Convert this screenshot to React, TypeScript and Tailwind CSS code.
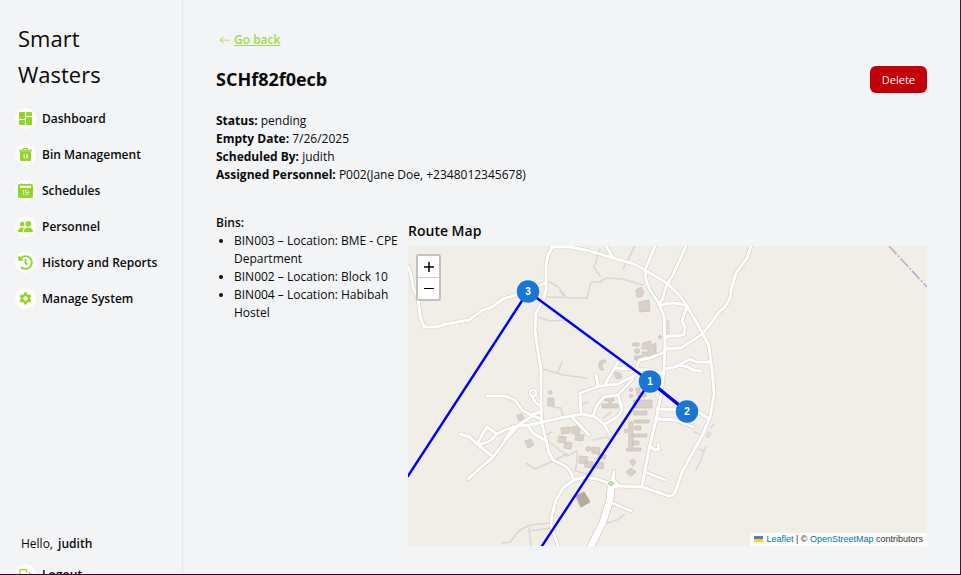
import type { ReactNode } from "react";
import { BsArrowLeft, BsCalendar2DateFill, BsPeopleFill } from "react-icons/bs";
import { FaHistory } from "react-icons/fa";
import { MdSettings } from "react-icons/md";
import { TbLogout } from "react-icons/tb";

function DashboardIcon() {
  return (
    <svg width="13" height="13" viewBox="0 0 13 13" fill="currentColor" aria-hidden="true">
      <rect x="0" y="0" width="6" height="7" rx="0.8" />
      <rect x="7" y="0" width="6" height="4" rx="0.8" />
      <rect x="0" y="8" width="6" height="5" rx="0.8" />
      <rect x="7" y="5" width="6" height="8" rx="0.8" />
    </svg>
  );
}

function BinIcon() {
  return (
    <svg width="13" height="13" viewBox="0 0 13 13" fill="currentColor" aria-hidden="true">
      <path d="M4 0h5v2H8V1H5v1H4z" />
      <rect x="0" y="1.6" width="13" height="1.8" rx="0.4" opacity="0.8" />
      <path d="M1 3.2h11V12q0 1-1 1H2q-1 0-1-1z" />
      <path d="M4.6 6.2h1.3v4H4.6zM7.2 6.2h1.3v4H7.2z" fill="#fff" />
    </svg>
  );
}

const navItems: { label: string; icon: ReactNode }[] = [
  { label: "Dashboard", icon: <DashboardIcon /> },
  { label: "Bin Management", icon: <BinIcon /> },
  { label: "Schedules", icon: <BsCalendar2DateFill size={15} /> },
  { label: "Personnel", icon: <BsPeopleFill size={15} /> },
  { label: "History and Reports", icon: <FaHistory size={15} /> },
  { label: "Manage System", icon: <MdSettings size={15} /> },
];

const details = [
  ["Status:", "pending"],
  ["Empty Date:", "7/26/2025"],
  ["Scheduled By:", "judith"],
  ["Assigned Personnel:", "P002(Jane Doe, +2348012345678)"],
];

const bins = [
  "BIN003 – Location: BME - CPE Department",
  "BIN002 – Location: Block 10",
  "BIN004 – Location: Habibah Hostel",
];

const roads = [
  "M408 266L411 275L413 287L418 298L420 316L424 327L436 327L446 324L469 320L483 310L492 307L503 299L516 295L528 291L540 285L546 283",
  "M553 246L548 255L546 265L546 290L543 300L536 313L535 330L538 352L541 368L541 408L542 424L546 440L549 453L553 460L567 467L571 473L574 480",
  "M551 247L570 247L590 251L613 258L634 264L645 270L660 279L668 284L680 296L687 306L703 334L709 346L711 362L713 380L714 395L710 417L702 436L694 450L682 472L676 490Q673 497 668 496L660 493L642 487L616 486",
  "M655 246L645 270L646 280L650 290L658 302L664 316L665 345L664 370L661 395L656 420L650 445L645 470L642 486",
  "M606 246L613 258",
  "M686 246L673 275L667 284L662 300L659 304",
  "M659 306Q672 300 687 306L682 321L685 327L684 334Q683 336 668 336L665 339",
  "M751 246L747 258L736 273L731 290L730 298L725 307L718 313L713 321L703 333L698 337L681 348L665 349",
  "M665 369L675 367L690 359L696 362L711 362",
  "M678 365L688 367L693 370L701 371",
  "M665 352L650 358L640 360Q637 362 637 374",
  "M664 374L650 370L615 368M618 362L604 386M637 374L618 384L600 386L580 393L581 412M596 375L598 386",
  "M593 416L597 405L604 397L618 395L622 408Q622 416 605 424M618 395L633 379",
  "M610 435L604 424L595 417L583 414L560 418L530 425L515 426L505 430L497 434L487 427L483 433L477 444M497 434L490 441L482 444L477 444",
  "M460 434L470 437L477 444L493 457L468 479M493 457L508 437L520 424L537 413M505 440L513 427",
  "M487 396L505 396L515 400L522 410L531 415L541 419M533 414L540 412M541 407L535 402L532 396",
  "M528 426L533 433L546 441M573 418L589 435",
  "M574 480L563 488L556 500L552 515L551 525L558 546M574 480L585 477L597 479L611 484",
  "M612 503L631 511M645 472L665 480M650 446L655 450L659 449L658 444",
  "M657 409L680 410L700 413L709 419M656 419L675 420L693 427",
];

const tracks =
  "M600 249L594 267L600 276M635 246L623 269M546 297L587 298L591 282L600 282L606 278L622 279L643 285M540 283L550 282L558 287L567 298L560 292M538 317L550 321L570 320M543 369L563 375L587 378M558 372L562 362M552 407L561 408L563 416M583 404L588 402M603 418L611 412M547 440L567 456L577 451L577 462L575 471L590 475M567 454L549 463L535 469L526 463M546 435L552 432M502 543L510 542L520 530L530 525L551 523M529 531L551 528M529 528L531 546M607 523L617 520L624 515M593 440L607 437L611 441M694 432L700 434M696 470L700 462L704 451L706 447M699 449L704 451M709 432q4 2-1 5q-3-1 1-5M711 428L714 424";

const buildings =
  "M636 290l5-3 3 5-3 5h-4zM639 302l10-2 1 11-10 1zM643 343l8-2v4l5-2v14l-8 2v-4l-6 1v-4h6v-3h-6zM633 343h6v3h-6zM635 356h7v4h-7zM561 428l8-1 1 6-8 1zM571 427l8-1 1 7-8 1zM559 436l7 1-1 6-7-1zM576 434l8 1-1 6-8-1zM565 442l7 1-1 6-7-1zM580 456l8 1-2 7-7-1zM592 447l8 1-1 6-7-1zM586 461l7 1-1 6-7-1zM596 462l8 1-1 6-8-1zM599 454l7 1-1 4-7-1zM525 441l6-2 3 6-6 3zM548 398h6v8h-6zM517 415l5-1 2 5-5 2zM549 391h3v3h-3zM630 461l3-2 3 3-3 4zM626 472l5-4 5 4-5 4zM636 388h4v5h6v4h-8zM634 400h18v8h-18zM634 411h13v4h-13zM635 420h14v3h-14zM635 426h6v4h-6zM632 434h15v3h-15zM633 441h6v4h-6zM627 448h14v3h-14zM629 422h4v25h-4zM614 372l6 1 2 5-5 1zM605 398h9v3h-3v3h7v4h-16v-4h7v-3h-4z";

const stops = [
  { n: 3, x: 528, y: 291.5 },
  { n: 1, x: 650, y: 381.5 },
  { n: 2, x: 687, y: 411.5 },
];

function RouteMap() {
  return (
    <div className="relative h-[300px] w-full overflow-hidden bg-[#f1eee8]">
      <svg
        viewBox="408 246 519 300"
        preserveAspectRatio="xMidYMid slice"
        className="block h-full w-full"
        role="img"
        aria-label="Route between bins"
      >
        <g fill="none" strokeLinejoin="round" strokeLinecap="round">
          <path d={tracks} stroke="#d9d8d5" strokeWidth="1.6" />
          <path d="M668 320V334" stroke="#dcdcdc" strokeWidth="3" strokeLinecap="butt" />
          <path d={buildings} fill="#d9d0c9" stroke="#cbbeb4" strokeWidth="0.7" />
          <path d="M605 360Q598 359 599 367Q600 371 604 370L602 367Q601 363 606 362Z" fill="#d9d0c9" stroke="#cbbeb4" strokeWidth="0.7" />
          <g fill="#d9d0c9" stroke="#cbbeb4" strokeWidth="0.7">
            <circle cx="637" cy="351" r="2.5" />
            <circle cx="660" cy="337" r="1.5" />
            <circle cx="631" cy="390" r="1.7" />
            <circle cx="631" cy="396" r="1.7" />
            <circle cx="626" cy="431" r="2" />
            <circle cx="588" cy="449" r="2.3" />
          </g>
          {roads.map((d) => (
            <path key={d} d={d} stroke="#d3d1cd" strokeWidth="4.2" />
          ))}
          <path d="M611 486L610 500L603 522L590 548" stroke="#c4c2be" strokeWidth="8" />
          <path d="M614 471L612 480L607 483L612 489L618 485L614 480Z" stroke="#d3d1cd" strokeWidth="3.8" />
          <circle cx="533" cy="393" r="3" stroke="#d3d1cd" strokeWidth="3.6" />
          {roads.map((d) => (
            <path key={d} d={d} stroke="#fff" strokeWidth="2.9" />
          ))}
          <path d="M611 486L610 500L603 522L590 548" stroke="#fff" strokeWidth="6.8" />
          <path d="M614 471L612 480L607 483L612 489L618 485L614 480Z" fill="#fff" stroke="#fff" strokeWidth="2.4" />
          <circle cx="533" cy="393" r="3" stroke="#fff" strokeWidth="2.2" />
          <ellipse cx="611" cy="483.5" rx="2.6" ry="2" fill="#c8e2ae" stroke="#aecb99" strokeWidth="0.7" />
          <path d="M576 496l8-4 6 10-9 5z" fill="#b8a99c" stroke="#a99a8d" strokeWidth="0.7" />
          <path d="M889 246L927 287" stroke="#c4a9c2" strokeWidth="1.7" strokeDasharray="11 2 2 2" strokeLinecap="butt" />
          <path d="M408 476L528 291.5L650 381.5L687 411.5L650 381.5L542 546" stroke="#0000f8" strokeWidth="2.4" />
          <path d="M650 381.5L687 411.5" stroke="#0000f8" strokeWidth="3.2" />
        </g>
        {stops.map((s) => (
          <g key={s.n}>
            <circle cx={s.x} cy={s.y} r="11.2" fill="#1976d2" />
            <text
              x={s.x}
              y={s.y + 3.5}
              textAnchor="middle"
              fill="#fff"
              className="font-['Liberation_Sans',sans-serif] text-[10px] font-bold"
            >
              {s.n}
            </text>
          </g>
        ))}
      </svg>
      <div className="absolute top-2 left-2 flex w-[25px] flex-col rounded-[3px] border-2 border-[#c3c1bc] bg-white text-black">
        <button type="button" aria-label="Zoom in" className="flex h-[22px] items-center justify-center border-b border-[#ccc]">
          <svg width="10" height="10" viewBox="0 0 10 10" stroke="currentColor" strokeWidth="1.5" aria-hidden="true">
            <path d="M0 5H10M5 0V10" />
          </svg>
        </button>
        <button type="button" aria-label="Zoom out" className="flex h-[21px] items-center justify-center">
          <svg width="10" height="3" viewBox="0 0 10 3" stroke="currentColor" strokeWidth="1" aria-hidden="true">
            <path d="M0 1.5H10" />
          </svg>
        </button>
      </div>
      <div className="absolute right-0 bottom-0 bg-white/80 px-1 font-['Liberation_Sans',Arial,sans-serif] text-[9px] leading-[13px] text-[#333]">
        <a href="#leaflet" className="text-[#0078a8]">
          <svg width="9" height="6" viewBox="0 0 9 6" className="mr-[3px] inline-block align-baseline" aria-hidden="true">
            <path fill="#4c7be1" d="M0 0h9v3H0z" />
            <path fill="#ffd500" d="M0 3h9v3H0z" />
          </svg>
          Leaflet
        </a>
        {" | © "}
        <a href="#osm" className="text-[#0078a8]">OpenStreetMap</a>
        {" contributors"}
      </div>
    </div>
  );
}

function IconBadge({ children }: { children: ReactNode }) {
  return (
    <span className="flex size-[21px] shrink-0 items-center justify-center rounded-full bg-white text-[#93d629]">
      {children}
    </span>
  );
}

export default function App() {
  return (
    <div className="flex h-screen overflow-hidden border-r border-b border-r-[#30212f] border-b-[#35082f] bg-[#f3f4f6] font-['Segoe_UI','Open_Sans','Noto_Sans',sans-serif] text-[12px] leading-[18px] text-[#0a0a0a]">
      <aside className="flex w-[183px] shrink-0 flex-col border-r border-[#e5e7eb] pt-5 pl-[15px]">
        <h1 className="w-32 pl-[3px] text-[22px] leading-9">Smart Wasters</h1>
        <nav className="mt-4 flex flex-col gap-[15px]">
          {navItems.map((item) => (
            <a key={item.label} href="#nav" className="flex items-center gap-[6px] font-semibold whitespace-nowrap">
              <IconBadge>{item.icon}</IconBadge>
              {item.label}
            </a>
          ))}
        </nav>
        <div className="mt-auto -mb-[11px] shrink-0">
          <p className="pl-[6px]">
            Hello, <span className="ml-[2px] font-semibold">judith</span>
          </p>
          <button type="button" className="mt-[11px] flex items-center gap-[6px] font-semibold">
            <IconBadge>
              <TbLogout size={15} />
            </IconBadge>
            Logout
          </button>
        </div>
      </aside>

      <main className="min-w-0 flex-1 pt-[31px] pr-[33px] pl-[33px]">
        <a href="#back" className="ml-[3px] inline-flex items-center gap-[3px] font-semibold text-[#a0d94a]">
          <BsArrowLeft size={12} />
          <span className="underline">Go back</span>
        </a>
        <div className="mt-[15px] flex items-center justify-between">
          <h2 className="text-[18px] leading-[27px] font-bold">SCHf82f0ecb</h2>
          <button type="button" className="h-[27px] rounded-md bg-[#c10007] px-3 text-[11px] font-medium text-white">
            Delete
          </button>
        </div>
        <div className="mt-[19px]">
          {details.map(([name, value]) => (
            <p key={name}>
              <strong className="font-bold">{name}</strong> {value}
            </p>
          ))}
        </div>
        <div className="mt-[30px] flex gap-1">
          <section className="w-[188px] shrink-0">
            <h3 className="font-semibold">Bins:</h3>
            <ul className="list-disc pl-[18px]">
              {bins.map((bin) => (
                <li key={bin}>{bin}</li>
              ))}
            </ul>
          </section>
          <section className="min-w-0 flex-1 pt-[6px]">
            <h3 className="mb-[5px] text-[14px] leading-[21px] font-semibold">Route Map</h3>
            <RouteMap />
          </section>
        </div>
      </main>
    </div>
  );
}
